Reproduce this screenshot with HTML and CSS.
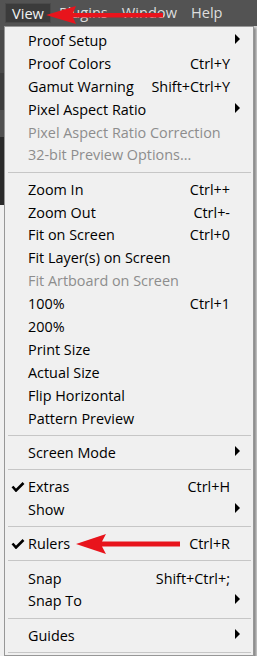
FILE: index.html
```html
<!DOCTYPE html>
<html lang="en">
<head>
    <meta charset="UTF-8">
    <meta name="viewport" content="width=device-width, initial-scale=1.0">
    <title>View menu</title>
    <link rel="stylesheet" href="styles.css">
</head>
<body>
    <!-- Thanh menu trên cùng -->
    <div class="menubar">
        <span class="top active">View</span>
        <span class="top">Plugins</span>
        <span class="top">Window</span>
        <span class="top">Help</span>
        <svg class="red-arrow arrow-top" width="170" height="26" viewBox="0 0 170 26">
            <polygon points="46,15 76,6 73,13 163,13 163,17.5 73,17.5 76,24" fill="#e8141c"/>
        </svg>
    </div>

    <div class="below">
        <div class="edge"></div>

        <!-- Menu View -->
        <div class="menu">
            <div class="item"><span></span><span class="label">Proof Setup</span><span></span><span class="sub"><i></i></span></div>
            <div class="item"><span></span><span class="label">Proof Colors</span><span class="key">Ctrl+Y</span><span></span></div>
            <div class="item"><span></span><span class="label">Gamut Warning</span><span class="key">Shift+Ctrl+Y</span><span></span></div>
            <div class="item"><span></span><span class="label">Pixel Aspect Ratio</span><span></span><span class="sub"><i></i></span></div>
            <div class="item disabled"><span></span><span class="label">Pixel Aspect Ratio Correction</span><span></span><span></span></div>
            <div class="item disabled"><span></span><span class="label">32-bit Preview Options...</span><span></span><span></span></div>
            <div class="sep"></div>
            <div class="item"><span></span><span class="label">Zoom In</span><span class="key">Ctrl++</span><span></span></div>
            <div class="item"><span></span><span class="label">Zoom Out</span><span class="key">Ctrl+-</span><span></span></div>
            <div class="item"><span></span><span class="label">Fit on Screen</span><span class="key">Ctrl+0</span><span></span></div>
            <div class="item"><span></span><span class="label">Fit Layer(s) on Screen</span><span></span><span></span></div>
            <div class="item disabled"><span></span><span class="label">Fit Artboard on Screen</span><span></span><span></span></div>
            <div class="item"><span></span><span class="label">100%</span><span class="key">Ctrl+1</span><span></span></div>
            <div class="item"><span></span><span class="label">200%</span><span></span><span></span></div>
            <div class="item"><span></span><span class="label">Print Size</span><span></span><span></span></div>
            <div class="item"><span></span><span class="label">Actual Size</span><span></span><span></span></div>
            <div class="item"><span></span><span class="label">Flip Horizontal</span><span></span><span></span></div>
            <div class="item"><span></span><span class="label">Pattern Preview</span><span></span><span></span></div>
            <div class="sep"></div>
            <div class="item"><span></span><span class="label">Screen Mode</span><span></span><span class="sub"><i></i></span></div>
            <div class="sep"></div>
            <div class="item">
                <span class="check"><svg width="14" height="10" viewBox="0 0 14 10"><path d="M1.5 4.5 L5 8.5 L12.5 1" fill="none" stroke="#000" stroke-width="2.6"/></svg></span>
                <span class="label">Extras</span><span class="key">Ctrl+H</span><span></span>
            </div>
            <div class="item"><span></span><span class="label">Show</span><span></span><span class="sub"><i></i></span></div>
            <div class="sep"></div>
            <div class="item">
                <span class="check"><svg width="14" height="10" viewBox="0 0 14 10"><path d="M1.5 4.5 L5 8.5 L12.5 1" fill="none" stroke="#000" stroke-width="2.6"/></svg></span>
                <span class="label">Rulers</span><span class="key">Ctrl+R</span><span></span>
                <!-- mũi tên đỏ chú thích -->
                <svg class="red-arrow arrow-rulers" width="190" height="24" viewBox="0 0 190 24">
                    <polygon points="76,12 106,2 102,9.5 180,9.5 180,14.5 102,14.5 106,22" fill="#e8141c"/>
                </svg>
            </div>
            <div class="sep"></div>
            <div class="item"><span></span><span class="label">Snap</span><span class="key">Shift+Ctrl+;</span><span></span></div>
            <div class="item"><span></span><span class="label">Snap To</span><span></span><span class="sub"><i></i></span></div>
            <div class="sep"></div>
            <div class="item"><span></span><span class="label">Guides</span><span></span><span class="sub"><i></i></span></div>
            <div class="sep"></div>
        </div>
    </div>
</body>
</html>
```

FILE: styles.css
```css
body {
    margin: 0;
    background: #d4d4d4;
    font-family: "Open Sans", sans-serif;
    font-size: 14.4px;
    overflow: hidden;
}
.menubar {
    position: relative;
    height: 26px;
    background: #535353;
    display: flex;
    align-items: center;
    padding-left: 5px;
    box-sizing: border-box;
    font-size: 14.6px;
}
.top {
    color: #dedede;
    padding: 0 7px;
    height: 20px;
    line-height: 19px;
    margin-right: 0;
    box-sizing: border-box;
}
.top.active {
    background: #3b3b3b;
    border: 1px solid #4a4a4a;
    color: #f2f2f2;
    padding: 0 6px;
    margin-right: 1px;
}
.red-arrow {
    position: absolute;
    left: 0;
    top: 0;
}
.below {
    display: flex;
    height: 630px;
}
.edge {
    width: 4px;
    flex: none;
    background: linear-gradient(to bottom,
        #535353 0, #535353 4px,
        #4a4a4a 4px, #4a4a4a 47px,
        #3d3d3d 47px, #3d3d3d 84px,
        #505050 84px, #505050 111px,
        #2a2a2a 111px, #2a2a2a 179px,
        #f0f0f0 179px);
}
.menu {
    width: 250px;
    flex: none;
    box-sizing: border-box;
    background: #f0f0f0;
    border: 1px solid #979797;
    padding-top: 2px;
    box-shadow: 2px 2px 2px rgba(0, 0, 0, 0.35);
}
.item {
    position: relative;
    display: grid;
    grid-template-columns: 23px 1fr auto 23px;
    align-items: center;
    height: 22.9px;
    color: #000;
    white-space: nowrap;
}
.item.disabled {
    color: #8d8d8d;
}
.check {
    display: flex;
    padding-left: 6px;
}
.key {
    text-align: right;
}
.sub {
    display: flex;
    padding-left: 5px;
}
.sub i {
    width: 0;
    height: 0;
    border-left: 5px solid #000;
    border-top: 5px solid transparent;
    border-bottom: 5px solid transparent;
    margin-top: -3px;
}
.sep {
    height: 11.4px;
    display: flex;
    align-items: center;
    padding: 0 2px 0 3px;
}
.sep::before {
    content: "";
    flex: 1;
    border-top: 1px solid #c6c6c6;
}
.arrow-rulers {
    top: 0;
    left: -5px;
}
```
